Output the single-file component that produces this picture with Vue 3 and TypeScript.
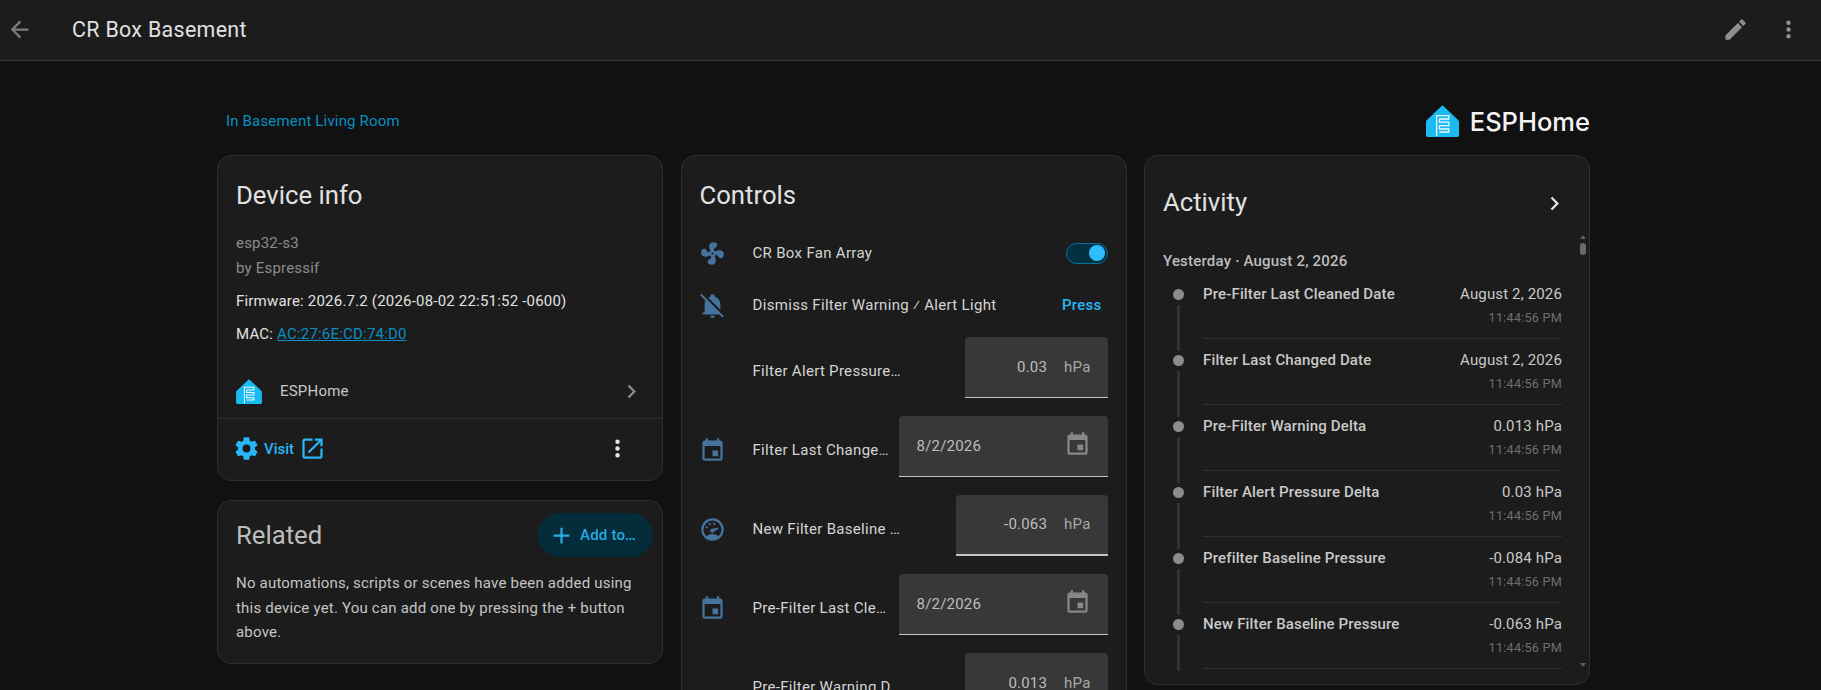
<script setup lang="ts">
const icons = {
  back: 'M20,11V13H8L13.5,18.5L12.08,19.92L4.16,12L12.08,4.08L13.5,5.5L8,11H20Z',
  pencil: 'M20.71,7.04C21.1,6.65 21.1,6 20.71,5.63L18.37,3.29C18,2.9 17.35,2.9 16.96,3.29L15.12,5.12L18.87,8.87M3,17.25V21H6.75L17.81,9.93L14.06,6.18L3,17.25Z',
  dots: 'M12,16A2,2 0 0,1 14,18A2,2 0 0,1 12,20A2,2 0 0,1 10,18A2,2 0 0,1 12,16M12,10A2,2 0 0,1 14,12A2,2 0 0,1 12,14A2,2 0 0,1 10,12A2,2 0 0,1 12,10M12,4A2,2 0 0,1 14,6A2,2 0 0,1 12,8A2,2 0 0,1 10,6A2,2 0 0,1 12,4Z',
  chevron: 'M8.59,16.58L13.17,12L8.59,7.41L10,6L16,12L10,18L8.59,16.58Z',
  cog: 'M12,15.5A3.5,3.5 0 0,1 8.5,12A3.5,3.5 0 0,1 12,8.5A3.5,3.5 0 0,1 15.5,12A3.5,3.5 0 0,1 12,15.5M19.43,12.97C19.47,12.65 19.5,12.33 19.5,12C19.5,11.67 19.47,11.34 19.43,11L21.54,9.37C21.73,9.22 21.78,8.95 21.66,8.73L19.66,5.27C19.54,5.05 19.27,4.96 19.05,5.05L16.56,6.05C16.04,5.66 15.5,5.32 14.87,5.07L14.5,2.42C14.46,2.18 14.25,2 14,2H10C9.75,2 9.54,2.18 9.5,2.42L9.13,5.07C8.5,5.32 7.96,5.66 7.44,6.05L4.95,5.05C4.73,4.96 4.46,5.05 4.34,5.27L2.34,8.73C2.21,8.95 2.27,9.22 2.46,9.37L4.57,11C4.53,11.34 4.5,11.67 4.5,12C4.5,12.33 4.53,12.65 4.57,12.97L2.46,14.63C2.27,14.78 2.21,15.05 2.34,15.27L4.34,18.73C4.46,18.95 4.73,19.03 4.95,18.95L7.44,17.94C7.96,18.34 8.5,18.68 9.13,18.93L9.5,21.58C9.54,21.82 9.75,22 10,22H14C14.25,22 14.46,21.82 14.5,21.58L14.87,18.93C15.5,18.67 16.04,18.34 16.56,17.94L19.05,18.95C19.27,19.03 19.54,18.95 19.66,18.73L21.66,15.27C21.78,15.05 21.73,14.78 21.54,14.63L19.43,12.97Z',
  open: 'M14,3V5H17.59L7.76,14.83L9.17,16.24L19,6.41V10H21V3M19,19H5V5H12V3H5C3.89,3 3,3.9 3,5V19A2,2 0 0,0 5,21H19A2,2 0 0,0 21,19V12H19V19Z',
  plus: 'M19,13H13V19H11V13H5V11H11V5H13V11H19V13Z',
  fan: 'M12,11A1,1 0 0,0 11,12A1,1 0 0,0 12,13A1,1 0 0,0 13,12A1,1 0 0,0 12,11M12.5,2C17,2 17.11,5.57 14.75,6.75C13.76,7.24 13.32,8.29 13.13,9.22C13.61,9.42 14.03,9.73 14.35,10.13C18.05,8.13 22.03,8.92 22.03,12.5C22.03,17 18.46,17.1 17.28,14.73C16.78,13.74 15.72,13.3 14.79,13.11C14.59,13.59 14.28,14 13.88,14.34C15.87,18.03 15.08,22 11.5,22C7,22 6.91,18.42 9.27,17.24C10.25,16.75 10.69,15.71 10.89,14.79C10.4,14.59 9.97,14.27 9.65,13.87C5.96,15.85 2,15.07 2,11.5C2,7 5.56,6.89 6.74,9.26C7.24,10.25 8.29,10.68 9.22,10.87C9.41,10.39 9.73,9.97 10.14,9.65C8.15,5.96 8.94,2 12.5,2Z',
  belloff: 'M20.84,22.73L18.11,20H3V19L5,17V11C5,9.86 5.29,8.73 5.83,7.72L1,2.89L2.28,1.61L22.11,21.46L20.84,22.73M19,15.8V11C19,7.9 16.97,5.17 14,4.29V4A2,2 0 0,0 12,2A2,2 0 0,0 10,4V4.29C9.39,4.47 8.8,4.74 8.26,5.09L19,15.8M12,23A2,2 0 0,0 14,21H10A2,2 0 0,0 12,23Z',
  calendar: 'M19,19H5V8H19M16,1V3H8V1H6V3H5C3.89,3 3,3.89 3,5V19A2,2 0 0,0 5,21H19A2,2 0 0,0 21,19V5C21,3.89 20.1,3 19,3H18V1M17,12H12V17H17V12Z',
  gauge: 'M12,2A10,10 0 0,0 2,12A10,10 0 0,0 12,22A10,10 0 0,0 22,12A10,10 0 0,0 12,2M12,4A8,8 0 0,1 20,12C20,14.4 19,16.5 17.3,18C15.9,16.7 14,16 12,16C10,16 8.2,16.7 6.7,18C5,16.5 4,14.4 4,12A8,8 0 0,1 12,4M9.6,6.3A1,1 0 0,0 8.6,7.3A1,1 0 0,0 9.6,8.3A1,1 0 0,0 10.6,7.3A1,1 0 0,0 9.6,6.3M13.5,6A1,1 0 0,0 12.5,7A1,1 0 0,0 13.5,8A1,1 0 0,0 14.5,7A1,1 0 0,0 13.5,6M6.8,9A1,1 0 0,0 5.8,10A1,1 0 0,0 6.8,11A1,1 0 0,0 7.8,10A1,1 0 0,0 6.8,9M10,13A1.9,1.9 0 1,0 13.8,13A1.9,1.9 0 1,0 10,13M11.3,11.5L12.3,14.2L17.3,11.6L16.8,10.2Z',
}

type Control = { label: string; icon?: string; kind: 'num' | 'date'; value: string; wide?: boolean }
const fields: Control[] = [
  { label: 'Filter Alert Pressure Delta', kind: 'num', value: '0.03' },
  { label: 'Filter Last Changed Date', icon: icons.calendar, kind: 'date', value: '8/2/2026' },
  { label: 'New Filter Baseline Pressure', icon: icons.gauge, kind: 'num', value: '-0.063', wide: true },
  { label: 'Pre-Filter Last Cleaned Date', icon: icons.calendar, kind: 'date', value: '8/2/2026' },
  { label: 'Pre-Filter Warning Delta', kind: 'num', value: '0.013' },
]

const activity = [
  { name: 'Pre-Filter Last Cleaned Date', value: 'August 2, 2026' },
  { name: 'Filter Last Changed Date', value: 'August 2, 2026' },
  { name: 'Pre-Filter Warning Delta', value: '0.013 hPa' },
  { name: 'Filter Alert Pressure Delta', value: '0.03 hPa' },
  { name: 'Prefilter Baseline Pressure', value: '-0.084 hPa' },
  { name: 'New Filter Baseline Pressure', value: '-0.063 hPa' },
]
</script>

<template>
  <div class="page">
    <header class="topbar">
      <svg class="ic back" viewBox="0 0 24 24"><path :d="icons.back" /></svg>
      <h1 class="title">CR Box Basement</h1>
      <svg class="ic top-edit" viewBox="0 0 24 24"><path :d="icons.pencil" /></svg>
      <svg class="ic top-more" viewBox="0 0 24 24"><path :d="icons.dots" /></svg>
    </header>

    <main class="main">
      <div class="subhead">
        <a class="area">In Basement Living Room</a>
        <div class="brand">
          <svg class="logo logo-big" viewBox="0 0 33 32">
            <path class="house" d="M16.5 0.2 L32.4 15.2 Q33 15.8 33 16.6 V30.2 Q33 32 31.2 32 H1.8 Q0 32 0 30.2 V16.6 Q0 15.8 0.6 15.2 Z" />
            <path class="comb" d="M10.6 31 V10.6 H22.8 V14 H13.4 M13.4 14 V17.2 H22.8 V20.6 H13.4 V24 H22.8 V27 H13.4" />
          </svg>
          <span class="brand-name">ESPHome</span>
        </div>
      </div>

      <div class="columns">
        <div class="col">
          <section class="card device">
            <h2 class="card-title">Device info</h2>
            <div class="dim line first">esp32-s3</div>
            <div class="dim line">by Espressif</div>
            <div class="info line fw">Firmware: 2026.7.2 (2026-08-02 22:51:52 -0600)</div>
            <div class="info line mac">MAC: <a class="mac-link">AC:27:6E:CD:74:D0</a></div>
            <div class="integration">
              <svg class="logo logo-small" viewBox="0 0 33 32">
                <path class="house" d="M16.5 0.2 L32.4 15.2 Q33 15.8 33 16.6 V30.2 Q33 32 31.2 32 H1.8 Q0 32 0 30.2 V16.6 Q0 15.8 0.6 15.2 Z" />
                <path class="comb" d="M10.6 31 V10.6 H22.8 V14 H13.4 M13.4 14 V17.2 H22.8 V20.6 H13.4 V24 H22.8 V27 H13.4" />
              </svg>
              <span class="int-name">ESPHome</span>
              <svg class="ic int-chevron" viewBox="0 0 24 24"><path :d="icons.chevron" /></svg>
            </div>
            <div class="actions">
              <svg class="ic accent" viewBox="0 0 24 24"><path :d="icons.cog" /></svg>
              <span class="visit">Visit</span>
              <svg class="ic accent open" viewBox="0 0 24 24"><path :d="icons.open" /></svg>
              <svg class="ic more-white" viewBox="0 0 24 24"><path :d="icons.dots" /></svg>
            </div>
          </section>

          <section class="card related">
            <div class="related-head">
              <h2 class="card-title related-title">Related</h2>
              <button class="add-btn">
                <svg class="ic add-ic" viewBox="0 0 24 24"><path :d="icons.plus" /></svg>
                <span>Add to…</span>
              </button>
            </div>
            <p class="related-text">No automations, scripts or scenes have been added using this device yet. You can add one by pressing the + button above.</p>
          </section>
        </div>

        <div class="col">
          <section class="card controls">
            <h2 class="card-title">Controls</h2>
            <div class="ctl-row fan-row">
              <svg class="ic state" viewBox="0 0 24 24"><path :d="icons.fan" /></svg>
              <span class="ctl-name">CR Box Fan Array</span>
              <span class="switch"><span class="knob"></span></span>
            </div>
            <div class="ctl-row bell-row">
              <svg class="ic state" viewBox="0 0 24 24"><path :d="icons.belloff" /></svg>
              <span class="ctl-name">Dismiss Filter Warning ⁄ Alert Light</span>
              <span class="press">Press</span>
            </div>
            <div v-for="f in fields" :key="f.label" class="field-row">
              <svg v-if="f.icon" class="ic state" viewBox="0 0 24 24"><path :d="f.icon" /></svg>
              <span v-else class="ic-gap"></span>
              <span class="field-label" :class="{ 'date-label': f.kind === 'date' }">{{ f.label }}</span>
              <div class="field" :class="[f.kind, { wide: f.wide }]">
                <template v-if="f.kind === 'num'">
                  <span class="val">{{ f.value }}</span>
                  <span class="unit">hPa</span>
                </template>
                <template v-else>
                  <span class="date-val">{{ f.value }}</span>
                  <svg class="ic cal" viewBox="0 0 24 24"><path :d="icons.calendar" /></svg>
                </template>
              </div>
            </div>
          </section>
        </div>

        <div class="col">
          <section class="card activity">
            <div class="act-head">
              <h2 class="card-title act-title">Activity</h2>
              <svg class="ic act-chevron" viewBox="0 0 24 24"><path :d="icons.chevron" /></svg>
            </div>
            <div class="day">Yesterday · August 2, 2026</div>
            <div class="entries">
              <div v-for="a in activity" :key="a.name" class="entry">
                <div class="rail"><span class="dot"></span><span class="stem"></span></div>
                <div class="entry-body">
                  <span class="entry-name">{{ a.name }}</span>
                  <div class="entry-right">
                    <div class="entry-val">{{ a.value }}</div>
                    <div class="entry-time">11:44:56 PM</div>
                  </div>
                </div>
              </div>
            </div>
            <div class="sb">
              <span class="sb-up"></span>
              <span class="sb-thumb"></span>
              <span class="sb-down"></span>
            </div>
          </section>
        </div>
      </div>
    </main>
  </div>
</template>

<style>
html, body { margin: 0; background: #111111; overflow: hidden; }
</style>

<style scoped>
.page {
  width: 1821px;
  height: 690px;
  overflow: hidden;
  background: #111111;
  font-family: Roboto, "Noto Sans", sans-serif;
  color: #e1e1e1;
}
.ic { width: 27px; height: 27px; fill: currentColor; display: block; flex: none; }
.topbar {
  height: 61px;
  box-sizing: border-box;
  border-bottom: 1px solid #353535;
  background: #1c1c1c;
  display: flex;
  align-items: center;
  padding: 0 18px 1px 6px;
}
.back { color: #7c7c7c; }
.title { margin: 0 0 0 39px; font-size: 21.4px; font-weight: 400; color: #e1e1e1; flex: 1; letter-spacing: 0.33px; }
.top-edit { color: #8f8f8f; margin-right: 26px; }
.top-more { color: #8f8f8f; margin-right: 1px; }
.main { padding: 0 231px 0 217px; }
.subhead {
  height: 94px;
  display: flex;
  justify-content: space-between;
}
.area { color: #0a8fc2; font-size: 15px; letter-spacing: 0.17px; margin: 50px 0 0 9px; line-height: 20px; }
.brand { display: flex; align-items: center; margin-top: 44px; height: 32px; }
.logo-big { width: 33px; height: 32px; }
.brand-name { font-family: Inter, Roboto, sans-serif; font-weight: 500; font-size: 25.5px; color: #f4f4f6; margin: 2px 0 0 11px; line-height: 34px; }
.house { fill: #18bcf2; }
.comb { fill: none; stroke: #f2fbff; stroke-width: 1.3; }
.columns { display: grid; grid-template-columns: 446px 446px 446px; column-gap: 17.5px; align-items: start; }
.col { display: flex; flex-direction: column; gap: 19px; }
.card {
  background: #1c1c1c;
  border: 1px solid #2f2f2f;
  border-radius: 14px;
  box-sizing: border-box;
  position: relative;
}
.card-title { margin: 0; font-size: 25.7px; font-weight: 400; line-height: 40px; color: #e1e1e1; }
.device { height: 326px; padding: 19px 18px 0; }
.line { font-size: 15px; line-height: 25px; letter-spacing: 0.2px; }
.dim { color: #8b8b8b; }
.first { margin-top: 15.5px; }
.info { color: #e1e1e1; }
.fw { margin-top: 8px; }
.mac { margin-top: 8px; }
.mac-link { color: #0a8fc2; text-decoration: underline; }
.integration {
  display: flex;
  align-items: center;
  margin-top: 31.5px;
  height: 26px;
}
.logo-small { width: 26px; height: 25px; }
.int-name { margin-left: 18px; font-size: 15px; letter-spacing: 0.2px; color: #c8c8c8; flex: 1; }
.int-chevron { color: #8a8a8a; margin-right: -1px; }
.actions {
  margin: 14px -18px 0;
  border-top: 1px solid #2f2f2f;
  padding: 16px 31px 0 15px;
  display: flex;
  align-items: center;
}
.accent { color: #29b6f6; }
.visit { color: #29b6f6; font-size: 15px; font-weight: 500; margin-left: 4px; }
.open { margin-left: 5px; flex: none; }
.more-white { color: #e6e6e6; margin-left: auto; }
.related { height: 164px; padding: 12px 18px 0; }
.related-head { display: flex; justify-content: space-between; align-items: center; height: 44px; margin-right: -9px; }
.related-title { color: #bcbcbc; }
.add-btn {
  width: 115px;
  height: 44px;
  border: 0;
  border-radius: 22px;
  background: #052c3b;
  color: #29abe2;
  display: flex;
  align-items: center;
  padding: 0 0 0 10px;
  font: 500 15px Roboto, sans-serif;
  letter-spacing: 0.2px;
}
.add-ic { margin-right: 5px; }
.related-text { margin: 14px 0 0; font-size: 15px; line-height: 24.5px; letter-spacing: 0.2px; color: #c4c4c4; }
.controls { padding: 19px 18px 0; height: 700px; }
.ctl-row { display: flex; align-items: center; height: 52px; }
.fan-row { margin-top: 12px; }
.bell-row { margin-bottom: 6px; }
.state { color: #44739e; margin-left: -1px; }
.ic-gap { width: 26px; flex: none; }
.ctl-name { margin-left: 27px; font-size: 15px; letter-spacing: 0.32px; color: #d4d4d4; flex: 1; }
.switch {
  width: 42px;
  height: 21px;
  box-sizing: border-box;
  border: 1px solid #03769f;
  border-radius: 11px;
  background: #02303f;
  display: flex;
  align-items: center;
  justify-content: flex-end;
  padding-right: 1.5px;
}
.knob { width: 16px; height: 16px; border-radius: 50%; background: #2dbdfb; }
.press { color: #29b6f6; font-size: 15px; font-weight: 500; letter-spacing: 0.27px; margin-right: 6px; }
.field-row { display: flex; align-items: center; height: 68px; margin-bottom: 11px; }
.field-label {
  margin: 0 -4px 0 27px;
  width: 151px;
  font-size: 15px;
  letter-spacing: 0.3px;
  color: #d4d4d4;
  white-space: nowrap;
  overflow: hidden;
  text-overflow: ellipsis;
  flex: none;
}
.date-label { width: 139px; margin-right: 0; }
.field {
  margin-left: auto;
  height: 61px;
  align-self: flex-start;
  box-sizing: border-box;
  flex: none;
  background: #383838;
  border-radius: 4px 4px 0 0;
  border-bottom: 1px solid #c4c4c4;
  display: flex;
  align-items: center;
  font-size: 15px;
  letter-spacing: 0.2px;
  color: #bdbdbd;
  padding-bottom: 1px;
}
.num { width: 143px; justify-content: flex-end; padding-right: 17px; }
.num.wide { width: 152px; border-bottom-width: 2px; }
.unit { margin-left: 17px; color: #a8a8a8; }
.date { width: 209px; justify-content: space-between; padding: 0 17px 1px 18px; }
.cal { color: #878787; margin-top: -2px; }
.activity { height: 530px; padding: 19px 18px 0; overflow: hidden; }
.act-head { display: flex; justify-content: space-between; align-items: center; height: 52px; }
.act-title { margin-top: 1px; }
.act-chevron { margin-right: 3px; margin-top: 5px; color: #e6e6e6; }
.day { font-size: 15px; font-weight: 500; letter-spacing: 0.2px; color: #bdbdbd; margin-top: 24px; line-height: 20px; }
.entries { margin: 2px 9px 0 0; }
.entry { display: flex; height: 66px; margin-left: 4px; }
.rail { flex: none; display: flex; flex-direction: column; align-items: center; padding: 15.5px 0 0; width: 22px; }
.dot { width: 11px; height: 11px; border-radius: 50%; background: #8c8c8c; flex: none; }
.stem { width: 3px; height: 46px; margin-top: 5.5px; background: #333333; flex: none; }
.entry:last-child .stem { height: 36px; }
.entry-body {
  flex: 1;
  margin-left: 14px;
  padding-top: 11px;
  border-bottom: 1px solid #2f2f2f;
  box-sizing: border-box;
  display: flex;
  justify-content: space-between;
  font-size: 15px;
  letter-spacing: 0.15px;
}
.entry-name { font-weight: 500; color: #c9c9c9; line-height: 20px; }
.entry-right { text-align: right; }
.entry-val { color: #c9c9c9; line-height: 20px; }
.entry-time { color: #6f6f6f; font-size: 12.6px; letter-spacing: 0.25px; line-height: 20px; margin-top: 4px; }
.sb { position: absolute; top: 0; bottom: 0; right: 0; width: 11px; }
.sb-up { position: absolute; top: 79px; left: 2px; width: 0; height: 0; border: 3px solid transparent; border-top: 0; border-bottom: 4px solid #5c5c5c; }
.sb-thumb { position: absolute; top: 87px; left: 2px; width: 6px; height: 12px; border-radius: 3px; background: #6a6a6a; }
.sb-down { position: absolute; bottom: 17px; left: 2px; width: 0; height: 0; border: 3px solid transparent; border-bottom: 0; border-top: 4px solid #5c5c5c; }
</style>
